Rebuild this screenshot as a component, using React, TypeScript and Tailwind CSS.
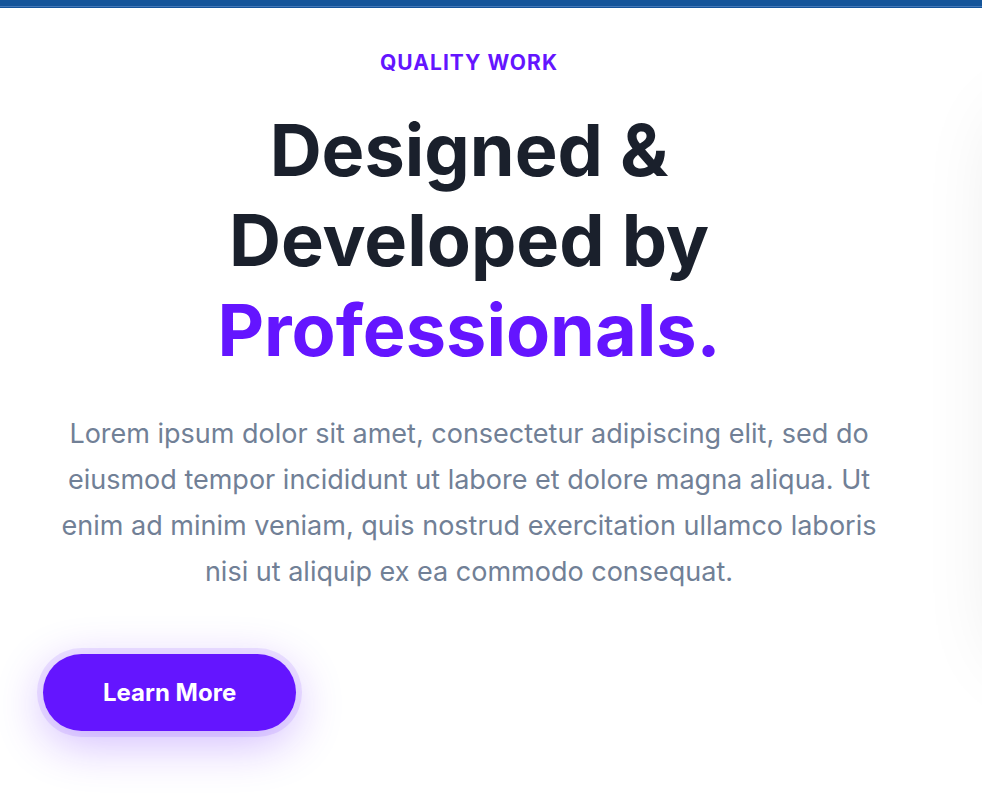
export default function App() {
  return (
    <main className="min-h-screen overflow-hidden bg-white font-['Inter',sans-serif]">
      <div className="h-2 bg-[#15559a] pt-1.5">
        <div className="h-px bg-[#4478b9]" />
      </div>
      <div className="flex">
        <section className="min-w-0 flex-1 pt-10 pb-14 pl-[43px]">
          <div className="text-center">
            <h5 className="text-[21px] leading-[30px] font-bold tracking-wider text-[#6415ff]">QUALITY WORK</h5>
            <h2 className="mt-[27px] text-[72px] leading-[90px] font-bold text-[#1a202c]">
              Designed &amp;<br />Developed by<br />
              <span className="text-[#6415ff]">Professionals.</span>
            </h2>
            <p className="mt-9 text-[27px] leading-[46px] text-[#718096]">
              Lorem ipsum dolor sit amet, consectetur adipiscing elit, sed do eiusmod tempor incididunt ut labore et dolore magna aliqua. Ut enim ad minim veniam, quis nostrud exercitation ullamco laboris nisi ut aliquip ex ea commodo consequat.
            </p>
          </div>
          <button className="mt-[59px] h-[77px] rounded-full bg-[#6415ff] px-[60px] text-[24px] font-bold text-white shadow-[0_0_0_6px_#6415ff1a,0_12px_48px_#6415ff4d]">Learn More</button>
        </section>
        <aside className="mt-[112px] mr-[-325px] ml-[112px] h-[536px] w-[300px] shrink-0 bg-white shadow-[0_0_80px_#0000001c]" />
      </div>
    </main>
  );
}
